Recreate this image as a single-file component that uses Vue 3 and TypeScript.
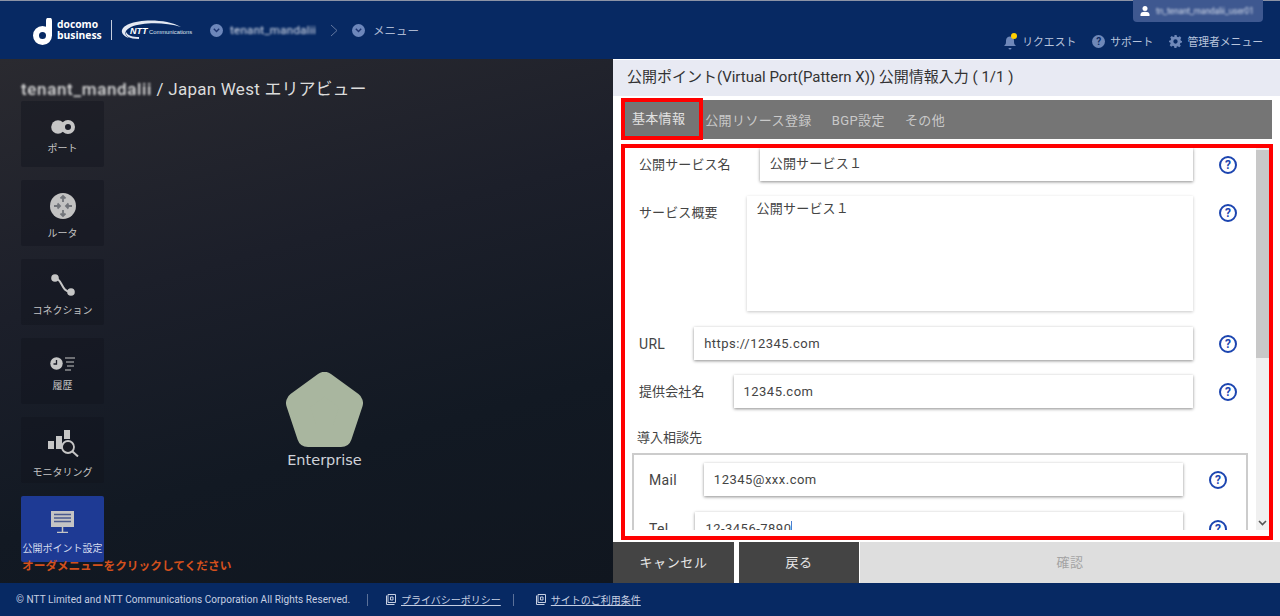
<script setup lang="ts">
const rows: { label: string; value: string; latin: boolean }[] = [
  { label: 'URL', value: 'https://12345.com', latin: true },
  { label: '提供会社名', value: '12345.com', latin: false },
]
const tabs: string[] = ['公開リソース登録', 'BGP設定', 'その他']
</script>

<template>
  <div class="page">
    <header class="header">
      <div class="brand">
        <svg class="d-logo" width="20" height="27" viewBox="0 0 20 27">
          <circle cx="9.5" cy="17.5" r="6.5" fill="none" stroke="#fff" stroke-width="6" />
          <path d="M13 2.5a2.5 2.5 0 0 1 6 0V18h-6z" fill="#fff" />
        </svg>
        <div class="d-text">docomo<br />business</div>
        <div class="brand-sep"></div>
        <svg class="ntt" width="78" height="22" viewBox="0 0 78 22">
          <path d="M12 5C24 0 50 0 64 8C48 3 26 3 14 8C8 11 6 15 12 19C3 16 2 9 12 5z" fill="#e4e9f3" />
          <path d="M22 20C12 20 8 17 9 13C11 17 16 18 22 18z" fill="#e4e9f3" />
          <text x="13" y="15" class="ntt-a">NTT</text>
          <text x="32" y="15" class="ntt-b">Communications</text>
        </svg>
      </div>
      <nav class="crumbs">
        <span class="chev"><svg width="7" height="5" viewBox="0 0 7 5"><path d="M.8.8 3.5 3.6 6.2.8" fill="none" stroke="#1d3470" stroke-width="1.4" /></svg></span>
        <span class="blur crumb-name">tenant_mandalii</span>
        <svg class="crumb-arrow" width="8" height="13" viewBox="0 0 8 13"><path d="M1 1l6 5.500-6 5.500" fill="none" stroke="#62779f" /></svg>
        <span class="chev"><svg width="7" height="5" viewBox="0 0 7 5"><path d="M.8.8 3.5 3.6 6.2.8" fill="none" stroke="#1d3470" stroke-width="1.4" /></svg></span>
        <span class="crumb-menu">メニュー</span>
      </nav>
      <div class="head-right">
        <div class="user-tag">
          <svg width="10" height="10" viewBox="0 0 10 10"><circle cx="5" cy="2.600" r="2.500" fill="#fff" /><path d="M.5 10V8.500C.5 6.500 2.500 5.800 5 5.800S9.500 6.500 9.500 8.500V10z" fill="#fff" /></svg>
          <span class="blur user-name">tn_tenant_mandalii_user01</span>
        </div>
        <div class="links">
          <span class="link bell-link">
            <svg width="15" height="17" viewBox="0 0 15 17">
              <path d="M1 13c2-1.500 2-3 2-5.500C3 5 5 3.500 7 3.500S11 5 11 7.500c0 2.500 0 4 2 5.500z" fill="#6f88b9" />
              <path d="M5.500 15h3a1.500 1.500 0 0 1-3 0z" fill="#6f88b9" />
              <circle cx="11" cy="3" r="3" fill="#ffd000" />
            </svg>
            リクエスト
          </span>
          <span class="link">
            <span class="q-round">?</span>
            サポート
          </span>
          <span class="link">
            <svg width="13" height="13" viewBox="0 0 24 24"><path fill="#6f88b9" fill-rule="evenodd" d="M10 0h4l.7 3.300 2.300 1 2.900-1.800 2.800 2.800L21 8.200l1 2.300 2 .5v3l-3 .7-1 2.300 1.800 2.900-2.800 2.800-2.900-1.800-2.300 1L14 24h-4l-.7-3.300-2.300-1-2.900 1.800-2.800-2.800L3 15.800l-1-2.300L0 13.500v-3l3-.7 1-2.300L2.200 4.600 5 1.800l2.900 1.800 2.300-1zM12 8a4 4 0 1 0 0 8 4 4 0 0 0 0-8z" /></svg>
            管理者メニュー
          </span>
        </div>
      </div>
    </header>

    <main class="main">
      <section class="canvas">
        <h1 class="view-title"><span class="blur title-name">tenant_mandalii</span><span class="title-area"> / Japan West </span>エリアビュー</h1>
        <div class="tiles">
          <div class="tile t-port">
            <svg width="24" height="14" viewBox="0 0 24 14"><circle cx="7" cy="7" r="6.800" fill="#c6c6c6" /><circle cx="17" cy="7" r="5" fill="#1b1d28" stroke="#c6c6c6" stroke-width="4" /></svg>
            <span>ポート</span>
          </div>
          <div class="tile t-router">
            <svg width="26" height="26" viewBox="0 0 26 26">
              <circle cx="13" cy="13" r="13" fill="#c2c2c2" />
              <g fill="none" stroke="#71747a" stroke-width="1.800">
                <path d="M13 3v6M10.500 5.500 13 3l2.500 2.500M13 23v-6M10.500 20.500 13 23l2.500-2.500" />
                <path d="M4 13h6M7.500 10.500 10 13l-2.500 2.500M22 13h-6M18.500 10.500 16 13l2.500 2.500" />
              </g>
            </svg>
            <span>ルータ</span>
          </div>
          <div class="tile t-conn">
            <svg width="24" height="22" viewBox="0 0 24 22">
              <circle cx="4" cy="4" r="3.800" fill="#c6c6c6" />
              <circle cx="20" cy="18" r="3.800" fill="#c6c6c6" />
              <path d="M4 4c7 0 6 14 16 14" fill="none" stroke="#c6c6c6" stroke-width="2" />
            </svg>
            <span>コネクション</span>
          </div>
          <div class="tile t-hist">
            <svg width="25" height="14" viewBox="0 0 25 14">
              <circle cx="6.500" cy="6.500" r="6.200" fill="#c6c6c6" />
              <path d="M6.500 3v4H3.500" fill="none" stroke="#1b1d28" stroke-width="1.300" />
              <path d="M15 1h10M16 5h8M17 9h7M15 13h6" stroke="#c6c6c6" />
            </svg>
            <span>履歴</span>
          </div>
          <div class="tile t-mon">
            <svg width="32" height="27" viewBox="0 0 32 27">
              <rect x="1" y="11" width="6" height="8" fill="#c6c6c6" />
              <rect x="9" y="6" width="6" height="13" fill="#c6c6c6" />
              <rect x="17" y="0" width="6" height="9" fill="#c6c6c6" />
              <circle cx="21" cy="17" r="6" fill="#181a22" stroke="#c6c6c6" stroke-width="1.800" />
              <path d="M25.500 21.500l5.500 5" stroke="#c6c6c6" stroke-width="2" />
            </svg>
            <span>モニタリング</span>
          </div>
          <div class="tile active t-pub">
            <svg width="23" height="22" viewBox="0 0 23 22">
              <rect x="0" y="0" width="23" height="16" fill="#c4c4c4" />
              <path d="M3 3.500h17M3 7h17M3 10.500h17" stroke="#4a5a8e" stroke-width="1.300" />
              <path d="M11.500 16v5M6 21.500h11" stroke="#c4c4c4" stroke-width="1.500" />
            </svg>
            <span>公開ポイント設定</span>
          </div>
        </div>
        <p class="hint">オーダメニューをクリックしてください</p>
        <div class="node">
          <svg width="77" height="75" viewBox="0 0 77 75">
            <path d="M38.500 11 66 31 55 64H22L11 31z" fill="#a9b69f" stroke="#a9b69f" stroke-width="22" stroke-linejoin="round" />
          </svg>
          <span class="node-label">Enterprise</span>
        </div>
      </section>

      <section class="panel">
        <div class="panel-title">公開ポイント(Virtual Port(Pattern X)) 公開情報入力 ( 1/1 )</div>
        <div class="tabs">
          <span class="tab tab-active">基本情報</span>
          <span v-for="t in tabs" :key="t" class="tab">{{ t }}</span>
        </div>
        <div class="form-wrap">
          <div class="form-scroll">
            <div class="form">
              <div class="row">
                <label>公開サービス名</label>
                <div class="field cjk">公開サービス１</div>
                <span class="help">?</span>
              </div>
              <div class="row row-top">
                <label>サービス概要</label>
                <div class="field cjk area">公開サービス１</div>
                <span class="help">?</span>
              </div>
              <div v-for="r in rows" :key="r.label" class="row">
                <label :class="{ latin: r.latin }">{{ r.label }}</label>
                <div class="field">{{ r.value }}</div>
                <span class="help">?</span>
              </div>
              <div class="sub-title">導入相談先</div>
              <div class="contact">
                <div class="row">
                  <label class="latin">Mail</label>
                  <div class="field">12345@xxx.com</div>
                  <span class="help">?</span>
                </div>
                <div class="row">
                  <label class="latin">Tel</label>
                  <div class="field">12-3456-7890<i class="caret"></i></div>
                  <span class="help">?</span>
                </div>
              </div>
            </div>
            <div class="scrollbar">
              <div class="thumb"></div>
              <svg class="sb-down" width="9" height="6" viewBox="0 0 9 6"><path d="M1 1l3.500 3.500L8 1" fill="none" stroke="#555" stroke-width="1.600" /></svg>
            </div>
          </div>
        </div>
        <div class="actions">
          <button class="btn dark cancel">キャンセル</button>
          <button class="btn dark back">戻る</button>
          <button class="btn confirm">確認</button>
        </div>
        <div class="mark mark-tab"></div>
        <div class="mark mark-form"></div>
      </section>
    </main>

    <footer class="footer">
      <span class="copy">© NTT Limited and NTT Communications Corporation All Rights Reserved.</span>
      <span class="f-sep"></span>
      <a class="f-link first">
        <svg width="11" height="11" viewBox="0 0 11 11"><path d="M1.500 1.500v9h8M3 .5h7.500v8H3zM5.500 3h2.500v3H5.500z" fill="none" stroke="#c6cfe2" /></svg>
        <u>プライバシーポリシー</u>
      </a>
      <span class="f-sep second"></span>
      <a class="f-link">
        <svg width="11" height="11" viewBox="0 0 11 11"><path d="M1.500 1.500v9h8M3 .5h7.500v8H3zM5.500 3h2.500v3H5.500z" fill="none" stroke="#c6cfe2" /></svg>
        <u>サイトのご利用条件</u>
      </a>
    </footer>
  </div>
</template>

<style>
html, body { margin: 0; padding: 0; background: #10161f; }
</style>

<style scoped>
.page {
  width: 1280px;
  height: 616px;
  display: flex;
  flex-direction: column;
  overflow: hidden;
  font-family: Roboto, "Noto Sans CJK JP", sans-serif;
}
.blur { filter: blur(1px); }

/* header */
.header {
  height: 58px;
  flex: none;
  display: flex;
  background: #072963;
  border-top: 1px solid #8c93a6;
  position: relative;
}
.brand { display: flex; align-items: center; margin-left: 33px; height: 58px; }
.d-logo { margin-top: 2px; }
.d-text {
  margin-left: 4px;
  color: #fff;
  font: 700 10.300px/11px "Open Sans", sans-serif;
  width: 50px;
  white-space: nowrap;
}
.brand-sep { width: 1px; height: 20px; background: #c5cddd; margin: 0 5px 0 4px; }
.ntt-a { font: italic 900 9px "Liberation Sans", sans-serif; fill: #fff; }
.ntt-b { font: 400 5.800px "Liberation Sans", sans-serif; fill: #dfe5f0; }
.crumbs { display: flex; align-items: center; margin-left: 15px; height: 58px; }
.chev {
  width: 13px;
  height: 13px;
  border-radius: 50%;
  background: #6d87bb;
  display: flex;
  align-items: center;
  justify-content: center;
}
.crumb-name { color: #dfe4ef; font-size: 11.500px; letter-spacing: 0.3px; width: 86px; margin-left: 7px; white-space: nowrap; }
.crumb-arrow { margin: 0 14px; }
.crumb-menu { color: #a9b6d0; font-size: 11.500px; margin-left: 8px; }
.head-right {
  margin-left: auto;
  margin-right: 17px;
  display: flex;
  flex-direction: column;
  align-items: flex-end;
}
.user-tag {
  width: 130px;
  height: 22px;
  margin-top: -1px;
  box-sizing: border-box;
  padding-left: 7px;
  background: #3e5890;
  border-radius: 0 0 4px 4px;
  display: flex;
  align-items: center;
  gap: 6px;
}
.user-name { color: #d7deec; font-size: 8.200px; white-space: nowrap; }
.links { display: flex; align-items: center; gap: 16px; margin-top: 10px; height: 18px; }
.link { display: flex; align-items: center; gap: 5px; color: #b8c4dc; font-size: 10.800px; }
.bell-link { gap: 4px; }
.q-round {
  width: 13px;
  height: 13px;
  border-radius: 50%;
  background: #6f88b9;
  color: #0b2a63;
  font: 700 10px/13px Roboto, sans-serif;
  text-align: center;
}

/* main */
.main { flex: 1; display: flex; min-height: 0; }
.canvas {
  width: 613px;
  flex: none;
  position: relative;
  padding: 19px 0 0 21px;
  box-sizing: border-box;
  background: linear-gradient(165deg, #2a2a30 0%, #1c1f2a 38%, #121923 70%, #10161f 100%);
}
.view-title {
  margin: 0;
  font-size: 17px;
  line-height: 22px;
  font-weight: 400;
  color: #dcdcdc;
  white-space: nowrap;
}
.title-name { font-weight: 500; letter-spacing: 0.65px; }
.title-area { letter-spacing: 0.25px; }
.tiles { display: flex; flex-direction: column; gap: 13px; margin-top: 1px; width: 83px; }
.tile {
  height: 66px;
  box-sizing: border-box;
  display: flex;
  flex-direction: column;
  align-items: center;
  gap: 9px;
  background: rgba(16, 18, 28, 0.42);
  border-radius: 2px;
  color: #c4c4c4;
  font-size: 10px;
  line-height: 11px;
  white-space: nowrap;
}
.tile svg { flex: none; }
.t-port { padding-top: 19px; }
.t-router { padding-top: 13px; }
.t-conn { padding-top: 15px; }
.t-hist { padding-top: 19px; gap: 9px; }
.t-mon { padding-top: 13px; gap: 10px; }
.t-pub { padding-top: 15px; gap: 10px; }
.tile.active { background: #1e3a94; color: #d5dcee; }
.hint {
  margin: -2px 0 0 1px;
  font-size: 11.700px;
  line-height: 12px;
  font-weight: 700;
  color: #d4501d;
  white-space: nowrap;
}
.node {
  position: absolute;
  left: 286px;
  top: 313px;
  width: 77px;
  display: flex;
  flex-direction: column;
  align-items: center;
}
.node-label {
  margin-top: 4px;
  color: #d0d3da;
  font: 400 14.500px/18px "DejaVu Sans", sans-serif;
}

/* panel */
.panel {
  flex: 1;
  position: relative;
  background: #fff;
  display: flex;
  flex-direction: column;
  min-width: 0;
}
.panel-title {
  height: 36px;
  margin-top: 1px;
  flex: none;
  background: #e8eaf3;
  color: #333;
  font-size: 15px;
  line-height: 34px;
  padding-left: 14px;
  white-space: nowrap;
}
.tabs {
  flex: none;
  height: 39px;
  box-sizing: border-box;
  padding: 0 0 1px 2px;
  margin: 4px 8px 0 10px;
  background: #757575;
  display: flex;
  align-items: center;
}
.tab {
  color: #c9c9c9;
  font-size: 13px;
  letter-spacing: 0.4px;
  padding: 0 10px;
  white-space: nowrap;
}
.tab-active {
  color: #e2e2e2;
  height: 34px;
  line-height: 32px;
  box-sizing: border-box;
  padding: 0 14px 0 6px;
  letter-spacing: 0.3px;
  border: 1px solid #5f8080;
  margin-right: -5px;
}
.form-wrap { flex: none; height: 402px; padding-top: 9px; box-sizing: border-box; }
.form-scroll {
  height: 382px;
  margin-left: 10px;
  width: 647px;
  display: flex;
  overflow: hidden;
}
.form { flex: 1; min-width: 0; padding: 0 19px 0 16px; }
.row {
  display: flex;
  align-items: center;
  gap: 29px;
  margin-bottom: 15px;
  color: #444;
  font-size: 13px;
}
.row label { white-space: nowrap; line-height: 16px; letter-spacing: 0.1px; }
.row label.latin { font-size: 14px; letter-spacing: 0.3px; }
.field {
  flex: 1;
  height: 33px;
  box-sizing: border-box;
  padding: 0 10px;
  line-height: 33px;
  background: #fff;
  color: #444;
  font-size: 13px;
  letter-spacing: 0.48px;
  box-shadow: 0 1px 3px rgba(0, 0, 0, 0.45);
  white-space: nowrap;
}
.field.cjk { letter-spacing: 0.2px; line-height: 32px; }
.field.area {
  height: 115px;
  line-height: 26px;
  box-shadow: 0 1px 3px rgba(0, 0, 0, 0.22);
}
.row-top { align-items: flex-start; margin-bottom: 16px; }
.row-top label { margin-top: 9px; }
.row-top .help { margin-top: 8px; }
.help {
  flex: none;
  width: 18px;
  height: 18px;
  box-sizing: border-box;
  border: 2px solid #1c45b0;
  border-radius: 50%;
  color: #1c45b0;
  font: 700 12px/14px Roboto, sans-serif;
  text-align: center;
  margin-left: -3px;
}
.sub-title {
  color: #444;
  font-size: 13px;
  line-height: 16px;
  margin: 22px 0 7px -2px;
}
.contact {
  margin-left: -7px;
  margin-right: -11px;
  border: 2px solid #ccc;
  padding: 8px 19px 0 15px;
}
.contact .row { margin-bottom: 16px; gap: 27px; }
.contact .help { margin-left: -1px; }
.caret { display: inline-block; width: 1px; height: 15px; background: #4a7fd0; vertical-align: -3px; }
.scrollbar {
  width: 14px;
  flex: none;
  background: #f0f0f0;
  position: relative;
}
.thumb { height: 208px; margin-top: 2px; background: #c8c8c8; }
.sb-down { position: absolute; left: 2px; bottom: 4px; }
.actions { flex: none; height: 41px; display: flex; margin-top: 1px; }
.btn {
  border: 0;
  padding: 0 0 2px;
  font-family: inherit;
  font-size: 13px;
  letter-spacing: 0.6px;
}
.dark { background: #444; color: #e8e8e8; }
.cancel { width: 121px; }
.back { width: 120px; margin-left: 5px; }
.confirm { flex: 1; margin-left: 1px; background: #dedede; color: #a4a4a4; }
.mark {
  position: absolute;
  box-sizing: border-box;
  border: 4px solid #f00;
  pointer-events: none;
}
.mark-tab { left: 8px; top: 39px; width: 82px; height: 42px; }
.mark-form { left: 8px; top: 85px; width: 652px; height: 396px; }

/* footer */
.footer {
  height: 33px;
  flex: none;
  background: #072963;
  display: flex;
  align-items: center;
  padding-left: 16px;
  color: #c6cfe2;
  font-size: 10px;
  white-space: nowrap;
}
.copy { width: 334px; letter-spacing: 0.07px; }
.f-sep { width: 1px; height: 12px; background: #5b7199; margin-left: 17px; }
.f-sep.second { margin-left: 12px; }
.f-link { display: flex; align-items: center; gap: 5px; margin-left: 21px; }
.f-link.first { margin-left: 17px; }
</style>
